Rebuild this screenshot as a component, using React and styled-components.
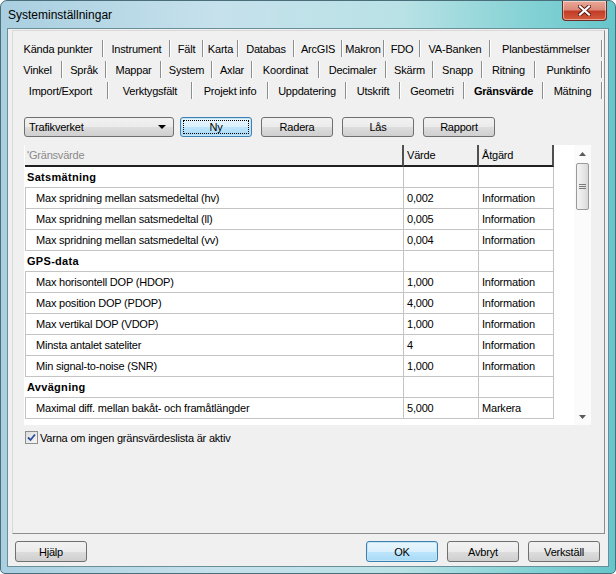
import React from 'react';
import styled, { createGlobalStyle, css } from 'styled-components';

const GlobalStyle = createGlobalStyle`
	html, body {
		margin: 0;
		padding: 0;
		background: #ffffff;
	}
	body {
		font-family: Tahoma, 'Liberation Sans', Arial, sans-serif;
		font-size: 11px;
		letter-spacing: -0.2px;
		color: #000;
	}
`;

const Window = styled.div`
	width: 616px;
	height: 574px;
	display: flex;
	flex-direction: column;
	box-sizing: border-box;
	border-radius: 7px 7px 5px 5px;
	border: 1px solid #4a6f7a;
	background: linear-gradient(90deg, #a9cfe0 0%, #c6e1ec 35%, #b9e2e6 65%, #7fd0d3 88%, #66c6cb 100%);
	overflow: hidden;
`;

const TitleBar = styled.div`
	height: 28px;
	display: flex;
	justify-content: space-between;
	align-items: flex-start;
	padding-left: 7px;
`;

const Title = styled.div`
	font-family: 'Liberation Sans', Arial, sans-serif;
	font-size: 12px;
	letter-spacing: 0;
	line-height: 28px;
	color: #000;
`;

const CloseButton = styled.div`
	width: 43px;
	height: 19px;
	margin-right: 8px;
	border: 1px solid #6b2b22;
	border-top: none;
	border-radius: 0 0 4px 4px;
	background: linear-gradient(180deg, #eaa89a 0%, #dc8a79 45%, #c23d28 55%, #d45a3c 100%);
	box-shadow: inset 0 0 0 1px rgba(255, 255, 255, 0.45);
	display: flex;
	align-items: center;
	justify-content: center;
`;

const Client = styled.div`
	flex: 1;
	margin: 0 7px 7px 7px;
	background: #f0f0f0;
	box-shadow: 0 0 0 1px #6a8f98;
	display: flex;
	flex-direction: column;
`;

const Panel = styled.div`
	margin: 1px 3px 0 4px;
	height: 504px;
	box-sizing: border-box;
	border: 1px solid;
	border-color: #d9d9d9 #8d8d8d #8d8d8d #d9d9d9;
	padding-top: 7px;
	display: flex;
	flex-direction: column;
`;

const TabRow = styled.div`
	display: flex;
	height: 21px;
`;

const Tab = styled.div`
	position: relative;
	width: ${(p) => p.$w}px;
	flex: none;
	display: flex;
	align-items: center;
	justify-content: center;
	white-space: nowrap;
	font-weight: ${(p) => (p.$active ? 'bold' : 'normal')};
	&::after {
		content: '';
		position: absolute;
		right: 0;
		top: 2px;
		bottom: 2px;
		width: 1px;
		background: #8e8e8e;
		box-shadow: 1px 0 0 #ffffff;
	}
`;

const Page = styled.div`
	padding: 16px 0 0 11px;
	display: flex;
	flex-direction: column;
`;

const Toolbar = styled.div`
	display: flex;
	height: 20px;
	gap: 9px;
`;

const Combo = styled.div`
	width: 150px;
	height: 20px;
	box-sizing: border-box;
	margin-right: -3px;
	border: 1px solid #707070;
	border-radius: 3px;
	background: linear-gradient(180deg, #f2f2f2 0%, #ebebeb 50%, #dddddd 51%, #cfcfcf 100%);
	display: flex;
	align-items: center;
	justify-content: space-between;
	padding: 0 7px 0 4px;
`;

const Arrow = styled.span`
	width: 0;
	height: 0;
	border-left: 4px solid transparent;
	border-right: 4px solid transparent;
	border-top: 4px solid #000;
`;

const Button = styled.div`
	width: ${(p) => p.$w || 72}px;
	height: ${(p) => p.$h || 20}px;
	box-sizing: border-box;
	border: 1px solid #707070;
	border-radius: 3px;
	background: linear-gradient(180deg, #f2f2f2 0%, #ebebeb 50%, #dddddd 51%, #cfcfcf 100%);
	display: flex;
	align-items: center;
	justify-content: center;
	position: relative;
	${(p) =>
		p.$default &&
		css`
			border-color: #3c7fb1;
			background: linear-gradient(180deg, #eaf6fd 0%, #d9f0fc 50%, #bee6fd 51%, #a7d9f5 100%);
			box-shadow: inset 0 0 0 1px #c5e4f5;
		`}
`;

const FocusRing = styled.span`
	position: absolute;
	inset: 3px;
	outline: 1px dotted #000;
`;

const Grid = styled.div`
	margin-top: 8px;
	width: 567px;
	height: 280px;
	display: flex;
	background: #ffffff;
`;

const Table = styled.div`
	margin-left: 1px;
	width: 530px;
	display: flex;
	flex-direction: column;
`;

const Row = styled.div`
	display: grid;
	grid-template-columns: 379px 75px 75px;
	height: ${(p) => (p.$head ? 22 : 21)}px;
`;

const HeadCell = styled.div`
	background: #f0f0f0;
	border-right: 2px solid #505050;
	border-bottom: 2px solid #202020;
	box-sizing: border-box;
	padding-left: ${(p) => (p.$first ? 2 : 3)}px;
	display: flex;
	align-items: center;
	color: ${(p) => (p.$muted ? '#8a8a8a' : '#000')};
`;

const Cell = styled.div`
	box-sizing: border-box;
	border-right: 1px solid #c4c4c4;
	border-bottom: 1px solid #c4c4c4;
	display: flex;
	align-items: center;
	white-space: nowrap;
	padding-left: 3px;
`;

const NameCell = styled(Cell)`
	padding-left: ${(p) => (p.$group ? 2 : 10)}px;
	border-left: ${(p) => (p.$group ? 'none' : '1px solid #c4c4c4')};
	font-weight: ${(p) => (p.$group ? 'bold' : 'normal')};
	letter-spacing: ${(p) => (p.$group ? '0.3px' : '-0.2px')};
`;

const ScrollBar = styled.div`
	margin-left: auto;
	width: 17px;
	display: flex;
	flex-direction: column;
	align-items: center;
	background: #fbfbfb;
`;

const ScrollArrow = styled.div`
	height: 17px;
	width: 17px;
	display: flex;
	align-items: center;
	justify-content: center;
`;

const Thumb = styled.div`
	margin-top: 1px;
	width: 13px;
	height: 47px;
	box-sizing: border-box;
	border: 1px solid #9a9a9a;
	border-radius: 2px;
	background: linear-gradient(90deg, #f3f3f3 0%, #e9e9e9 50%, #d9d9d9 100%);
	display: flex;
	align-items: center;
	justify-content: center;
`;

const Track = styled.div`
	flex: 1;
`;

const CheckRow = styled.div`
	margin-top: 6px;
	margin-left: 1px;
	display: flex;
	align-items: center;
	gap: 2px;
	height: 13px;
`;

const CheckBox = styled.div`
	width: 13px;
	height: 13px;
	box-sizing: border-box;
	border: 1px solid #8f8f8f;
	background: linear-gradient(135deg, #dcdcdc 0%, #f6f6f6 100%);
	display: flex;
	align-items: center;
	justify-content: center;
`;

const Footer = styled.div`
	margin-top: 7px;
	padding: 0 8px 0 7px;
	display: flex;
	gap: 9px;
`;

const Spacer = styled.div`
	flex: 1;
`;

const tabRows = [
	[
		['Kända punkter', 90],
		['Instrument', 67],
		['Fält', 33],
		['Karta', 35],
		['Databas', 56],
		['ArcGIS', 48],
		['Makron', 42],
		['FDO', 36],
		['VA-Banken', 70],
		['Planbestämmelser', 112],
	],
	[
		['Vinkel', 49],
		['Språk', 44],
		['Mappar', 55],
		['System', 51],
		['Axlar', 40],
		['Koordinat', 67],
		['Decimaler', 67],
		['Skärm', 47],
		['Snapp', 49],
		['Ritning', 53],
		['Punktinfo', 67],
	],
	[
		['Import/Export', 95],
		['Verktygsfält', 84],
		['Projekt info', 76],
		['Uppdatering', 78],
		['Utskrift', 54],
		['Geometri', 64],
		['Gränsvärde', 79],
		['Mätning', 59],
	],
];

const limits = [
	{ group: 'Satsmätning' },
	{ name: 'Max spridning mellan satsmedeltal (hv)', value: '0,002', action: 'Information' },
	{ name: 'Max spridning mellan satsmedeltal (ll)', value: '0,005', action: 'Information' },
	{ name: 'Max spridning mellan satsmedeltal (vv)', value: '0,004', action: 'Information' },
	{ group: 'GPS-data' },
	{ name: 'Max horisontell DOP (HDOP)', value: '1,000', action: 'Information' },
	{ name: 'Max position DOP (PDOP)', value: '4,000', action: 'Information' },
	{ name: 'Max vertikal DOP (VDOP)', value: '1,000', action: 'Information' },
	{ name: 'Minsta antalet sateliter', value: '4', action: 'Information' },
	{ name: 'Min signal-to-noise (SNR)', value: '1,000', action: 'Information' },
	{ group: 'Avvägning' },
	{ name: 'Maximal diff. mellan bakåt- och framåtlängder', value: '5,000', action: 'Markera' },
];

function App() {
	return (
		<>
			<GlobalStyle />
			<Window>
				<TitleBar>
					<Title>Systeminställningar</Title>
					<CloseButton>
						<svg width="13" height="11" viewBox="0 0 13 11">
							<path d="M2 1.5 L11 9.5 M11 1.5 L2 9.5" stroke="#5a1a12" strokeWidth="4" strokeLinecap="square" />
							<path d="M2 1.5 L11 9.5 M11 1.5 L2 9.5" stroke="#ffffff" strokeWidth="2.2" strokeLinecap="square" />
						</svg>
					</CloseButton>
				</TitleBar>
				<Client>
					<Panel>
						{tabRows.map((row, i) => (
							<TabRow key={i}>
								{row.map(([label, w]) => (
									<Tab key={label} $w={w} $active={label === 'Gränsvärde'}>
										{label}
									</Tab>
								))}
							</TabRow>
						))}
						<Page>
							<Toolbar>
								<Combo>
									<span>Trafikverket</span>
									<Arrow />
								</Combo>
								<Button $default>
									Ny
									<FocusRing />
								</Button>
								<Button>Radera</Button>
								<Button>Lås</Button>
								<Button>Rapport</Button>
							</Toolbar>
							<Grid>
								<Table>
									<Row $head>
										<HeadCell $first $muted>
											'Gränsvärde
										</HeadCell>
										<HeadCell>Värde</HeadCell>
										<HeadCell>Åtgärd</HeadCell>
									</Row>
									{limits.map((r, i) =>
										r.group ? (
											<Row key={i}>
												<NameCell $group>{r.group}</NameCell>
												<Cell />
												<Cell />
											</Row>
										) : (
											<Row key={i}>
												<NameCell>{r.name}</NameCell>
												<Cell>{r.value}</Cell>
												<Cell>{r.action}</Cell>
											</Row>
										)
									)}
								</Table>
								<ScrollBar>
									<ScrollArrow>
										<svg width="7" height="4" viewBox="0 0 7 4">
											<path d="M0 4 L3.5 0 L7 4 Z" fill="#5a5a5a" />
										</svg>
									</ScrollArrow>
									<Thumb>
										<svg width="7" height="6" viewBox="0 0 7 6">
											<path d="M0 0.5 H7 M0 2.5 H7 M0 4.5 H7" stroke="#7a7a7a" strokeWidth="1" />
										</svg>
									</Thumb>
									<Track />
									<ScrollArrow>
										<svg width="7" height="4" viewBox="0 0 7 4">
											<path d="M0 0 L7 0 L3.5 4 Z" fill="#5a5a5a" />
										</svg>
									</ScrollArrow>
								</ScrollBar>
							</Grid>
							<CheckRow>
								<CheckBox>
									<svg width="9" height="9" viewBox="0 0 9 9">
										<path d="M1 4.5 L3.5 7 L8 1.5" stroke="#2a4f9c" strokeWidth="1.8" fill="none" />
									</svg>
								</CheckBox>
								<span>Varna om ingen gränsvärdeslista är aktiv</span>
							</CheckRow>
						</Page>
					</Panel>
					<Footer>
						<Button $h={21}>Hjälp</Button>
						<Spacer />
						<Button $h={21} $default>
							OK
						</Button>
						<Button $h={21}>Avbryt</Button>
						<Button $h={21}>Verkställ</Button>
					</Footer>
				</Client>
			</Window>
		</>
	);
}

export default App;
